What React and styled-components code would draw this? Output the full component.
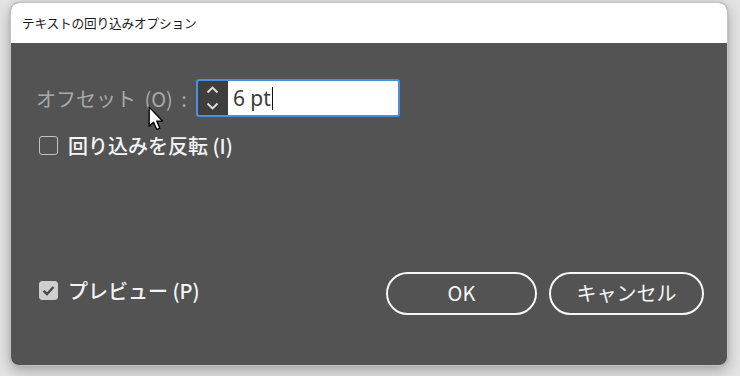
import React, { useState } from "react";
import styled, { createGlobalStyle } from "styled-components";

const Global = createGlobalStyle`
  html, body {
    margin: 0;
    padding: 0;
    background: #e4e4e4;
    width: 740px;
    height: 376px;
    overflow: hidden;
  }
  * { box-sizing: border-box; }
`;

const JP = `"Noto Sans CJK JP", "Noto Sans", sans-serif`;

const Page = styled.div`
  width: 740px;
  height: 376px;
  padding: 2px 12px 0 10px;
  position: relative;
`;

const Dialog = styled.div`
  width: 718px;
  height: 364px;
  display: flex;
  flex-direction: column;
  border-radius: 9px;
  overflow: hidden;
  background: #535353;
  border: 1px solid #c4c4c4;
  box-shadow: 0 5px 14px rgba(0, 0, 0, 0.28), 0 0 3px rgba(0, 0, 0, 0.12);
`;

const TitleBar = styled.div`
  height: 40px;
  flex: none;
  background: #fff;
  display: flex;
  align-items: center;
  padding: 0 0 1px 11px;
  font-family: ${JP};
  font-size: 12.7px;
  color: #1a1a1a;
  letter-spacing: -0.2px;
`;

const Body = styled.div`
  flex: 1;
  display: flex;
  flex-direction: column;
  padding: 36px 23px 50px 25px;
  font-family: ${JP};
  font-size: 20px;
  color: #f2f2f2;
`;

const Row = styled.div`
  display: flex;
  align-items: center;
  gap: ${(p) => p.$gap || 9}px;
  margin-left: ${(p) => p.$indent || 0}px;
  margin-top: ${(p) => p.$top || 0}px;
  margin-bottom: ${(p) => p.$bottom || 0}px;
`;

const Label = styled.span`
  color: ${(p) => (p.$dim ? "#a9a9a9" : "#f4f4f4")};
  font-weight: ${(p) => (p.$dim ? 400 : 500)};
  word-spacing: ${(p) => (p.$dim ? 4 : 0)}px;
  white-space: nowrap;
`;

const Field = styled.div`
  width: 204px;
  height: 38px;
  display: flex;
  border: 2px solid #4b8fdc;
  border-radius: 3px;
  background: #fff;
  overflow: hidden;
`;

const Spinner = styled.div`
  width: 30px;
  flex: none;
  background: #3e3e3e;
  display: flex;
  flex-direction: column;
  align-items: center;
  justify-content: center;
  gap: 8px;
`;

const FieldText = styled.span`
  display: flex;
  align-items: center;
  padding-left: 5px;
  font-family: "Noto Sans", sans-serif;
  font-size: 21px;
  color: #3a3a3a;
`;

const Caret = styled.span`
  display: inline-block;
  width: 1.5px;
  height: 23px;
  background: #111;
  margin-left: 1px;
`;

const Box = styled.span`
  width: 19px;
  height: 19px;
  flex: none;
  border-radius: 3px;
  border: 1.5px solid ${(p) => (p.$checked ? "#cfcfcf" : "#c2c2c2")};
  background: ${(p) => (p.$checked ? "#cfcfcf" : "transparent")};
  display: flex;
  align-items: center;
  justify-content: center;
`;

const Footer = styled.div`
  margin-top: auto;
  display: flex;
  align-items: center;
  justify-content: space-between;
  padding-left: 3px;
`;

const Buttons = styled.div`
  display: flex;
  gap: 12px;
`;

const Button = styled.button`
  width: ${(p) => p.$w}px;
  height: 43px;
  border: 2.5px solid #f6f6f6;
  border-radius: 22px;
  background: transparent;
  color: #f6f6f6;
  font-family: ${JP};
  font-size: 20px;
  display: flex;
  align-items: center;
  justify-content: center;
  padding: 0 0 2px;
`;

const Cursor = styled.svg`
  position: absolute;
  left: 148px;
  top: 106px;
`;

const Chevron = ({ up }) => (
  <svg width="13" height="8" viewBox="0 0 13 8">
    <path
      d={up ? "M1.5 6.5 L6.5 1.5 L11.5 6.5" : "M1.5 1.5 L6.5 6.5 L11.5 1.5"}
      fill="none"
      stroke="#e2e2e2"
      strokeWidth="1.8"
    />
  </svg>
);

const Check = () => (
  <svg width="13" height="11" viewBox="0 0 13 11">
    <path d="M1.5 5.8 L5 9 L11.5 2" fill="none" stroke="#4a4a4a" strokeWidth="2.4" />
  </svg>
);

export default function App() {
  const [invert, setInvert] = useState(false);
  const [preview, setPreview] = useState(true);
  return (
    <Page>
      <Global />
      <Dialog>
        <TitleBar>テキストの回り込みオプション</TitleBar>
        <Body>
          <Row>
            <Label $dim>オフセット (O) :</Label>
            <Field>
              <Spinner>
                <Chevron up />
                <Chevron />
              </Spinner>
              <FieldText>
                6 pt<Caret />
              </FieldText>
            </Field>
          </Row>
          <Row $indent={3} $top={14} $gap={10} onClick={() => setInvert(!invert)}>
            <Box $checked={invert}>{invert && <Check />}</Box>
            <Label>回り込みを反転 (I)</Label>
          </Row>
          <Footer>
            <Row $gap={10} $bottom={7} onClick={() => setPreview(!preview)}>
              <Box $checked={preview}>{preview && <Check />}</Box>
              <Label>プレビュー (P)</Label>
            </Row>
            <Buttons>
              <Button $w={151}>OK</Button>
              <Button $w={155}>キャンセル</Button>
            </Buttons>
          </Footer>
        </Body>
      </Dialog>
      <Cursor width="16" height="24" viewBox="0 0 14.5 22">
        <path
          d="M1 1 L1 18.5 L5 14.8 L8 21.5 L10.8 20.3 L7.9 13.8 L13.2 13.8 Z"
          fill="#fff"
          stroke="#000"
          strokeWidth="1.2"
          strokeLinejoin="round"
        />
      </Cursor>
    </Page>
  );
}
